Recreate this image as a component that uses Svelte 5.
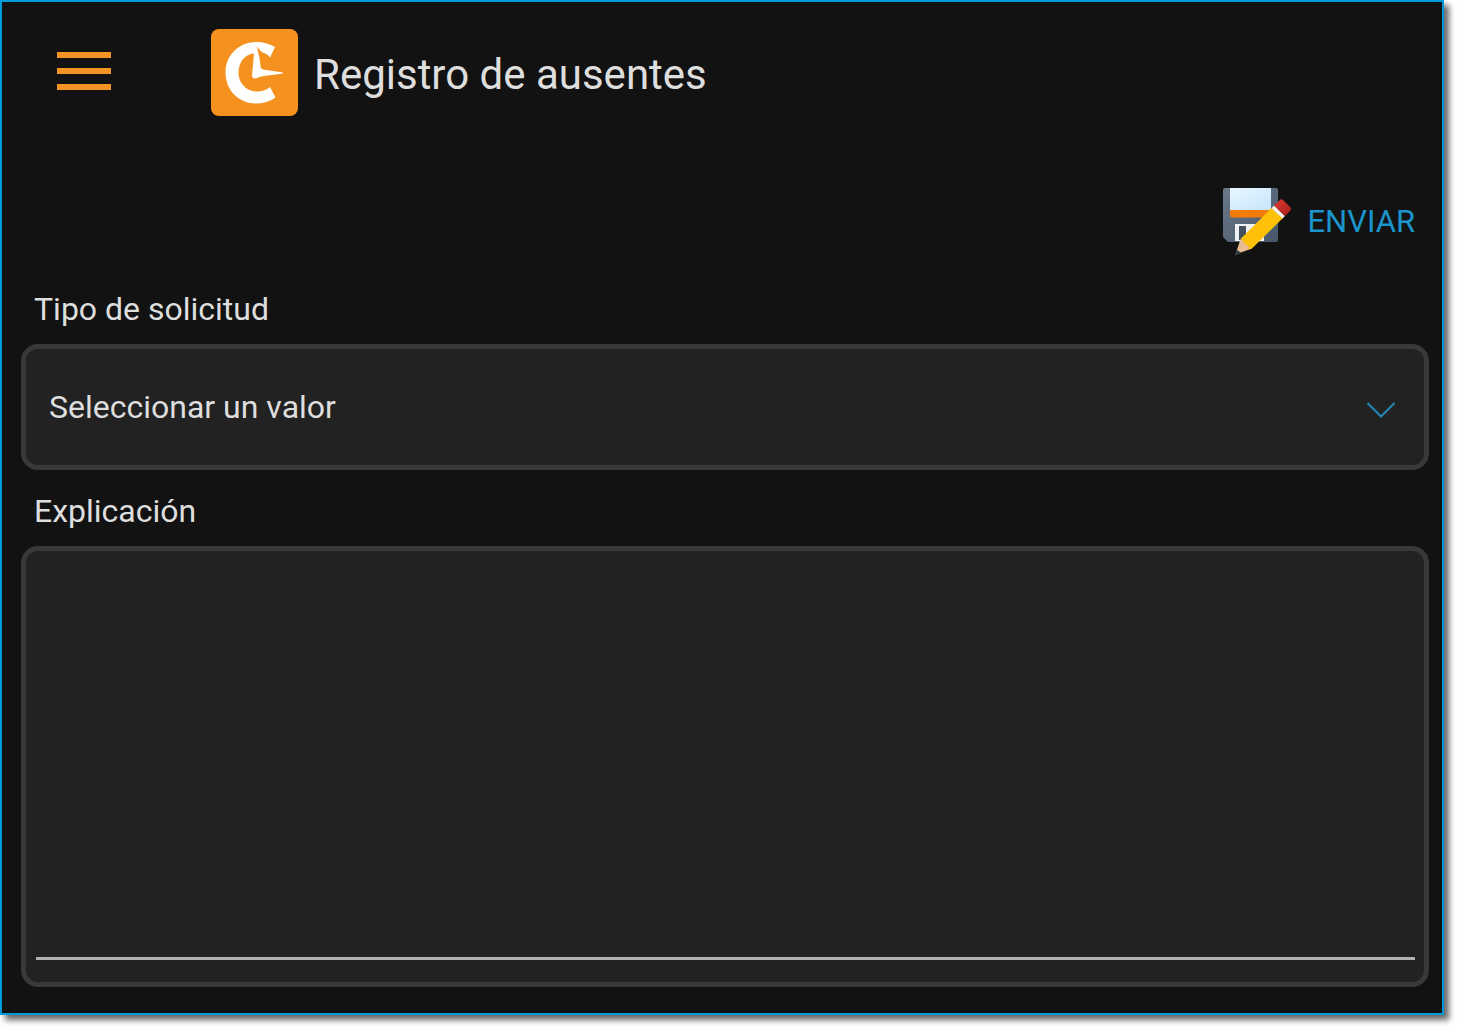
<script>
  let requestType = $state('');
  let explanation = $state('');
</script>

<div class="page">
  <main class="window">
    <header class="topbar">
      <button class="menu" type="button" aria-label="Menú">
        <svg viewBox="0 0 54 38" width="54" height="38" aria-hidden="true">
          <path d="M0 3h54M0 19h54M0 35h54" stroke="#f39325" stroke-width="6" />
        </svg>
      </button>
      <svg class="logo" viewBox="0 0 87 87" width="87" height="87" aria-hidden="true">
        <rect width="87" height="87" rx="8" fill="#f5921f" />
        <path
          d="M64 18C58 14.500 51.500 13 45.500 13C27 13 14.500 27 14.500 43.500C14.500 61 27.500 74.500 45 74.500C52 74.500 59 72.500 64.500 68.500L59 58C55 61.500 50.500 62.500 46 62.500C35 62.500 27.500 54 27.500 43.500C27.500 33 34 25 43 24.500L41 46.500Q41 50 45 49.500Q48.500 47.500 51.500 47.300L72 44.500V43.500L52 40.500L49.800 39L48.500 29L45.700 17Q48.500 21.500 51.500 23.500Q56 24.500 59 28.500Z"
          fill="#fff"
        />
      </svg>
      <h1>Registro de ausentes</h1>
    </header>

    <form class="form" onsubmit={(event) => event.preventDefault()}>
      <button class="send" type="submit">
        <svg viewBox="0 0 69 69" width="69" height="69" aria-hidden="true">
          <defs>
            <linearGradient id="disk" x1="0" y1="0" x2="1" y2="1">
              <stop offset="0" stop-color="#6b7a89" />
              <stop offset="1" stop-color="#46566a" />
            </linearGradient>
            <linearGradient id="label" x1="0" y1="0" x2="1" y2="1">
              <stop offset="0" stop-color="#e8f6ff" />
              <stop offset="1" stop-color="#c5e4fa" />
            </linearGradient>
            <linearGradient id="eraser" x1="0" y1="0" x2="1" y2="1">
              <stop offset="0" stop-color="#de3b32" />
              <stop offset="1" stop-color="#a71f1b" />
            </linearGradient>
          </defs>
          <path d="M2 1H53Q55 1 55 3V53Q55 55 53 55H5L0 50V3Q0 1 2 1Z" fill="url(#disk)" />
          <path d="M7 1H48V23H7Z" fill="url(#label)" />
          <path d="M7 23H48V28Q48 30.500 46 30.500H9Q7 30.500 7 28Z" fill="#f57c0b" />
          <path d="M12 37H41V54H12Z" fill="#eef2f5" />
          <path d="M16 39H23V53H16Z" fill="#43505e" />
          <path d="M12.500 67.500L17.500 52L29 61.500Z" fill="#e8bc91" />
          <path d="M12 68.500L13.500 62.500L18.500 66Z" fill="#373e46" />
          <path d="M17.500 52L48.500 21L60 31L29 61.500L26 62.500Q26 57.500 22 57.500Q21 53.500 17.500 52Z" fill="#ffc107" />
          <path d="M48.500 21L51 18.500L62 29L59.500 31.500Z" fill="#f5f1ef" />
          <path d="M51 18.500L57.500 12.500Q59 12 60 13L67.500 20.500Q68.500 22 67.500 23.500L62 29Z" fill="url(#eraser)" />
        </svg>
        <span>ENVIAR</span>
      </button>

      <label for="request-type">Tipo de solicitud</label>
      <div class="field picker">
        <select id="request-type" bind:value={requestType}>
          <option value="">Seleccionar un valor</option>
        </select>
        <svg class="chevron" viewBox="0 0 30 18" width="30" height="18" aria-hidden="true">
          <path d="M1.500 2L15 15.500L28.500 2" fill="none" stroke="#2589b5" stroke-width="2" />
        </svg>
      </div>

      <label for="explanation">Explicación</label>
      <div class="field notes">
        <textarea id="explanation" bind:value={explanation}></textarea>
      </div>
    </form>
  </main>
</div>

<style>
  :global(body) {
    margin: 0;
    background: #fff;
  }

  .page,
  .page * {
    box-sizing: border-box;
  }

  .page {
    display: flex;
    min-height: 100vh;
    padding: 0 14px 14px 0;
    font-family: Roboto, "Liberation Sans", sans-serif;
    font-size: 32px;
    line-height: 40px;
    color: #dedede;
  }

  .window {
    display: flex;
    flex: 1;
    flex-direction: column;
    min-width: 0;
    border: 2px solid #009bdc;
    background: #121212;
    box-shadow: 5px 5px 6px rgba(0, 0, 0, 0.6);
  }

  .topbar {
    display: flex;
    align-items: center;
    padding: 27px 24px 0 55px;
  }

  button {
    padding: 0;
    border: 0;
    background: none;
    font: inherit;
    cursor: pointer;
  }

  .menu {
    display: flex;
    margin-right: 100px;
    padding-bottom: 4px;
  }

  .logo {
    flex: none;
    margin-right: 16px;
  }

  h1 {
    margin: 0;
    padding-top: 4px;
    font-size: 42px;
    font-weight: 400;
    line-height: 48px;
  }

  .form {
    display: flex;
    flex: 1;
    flex-direction: column;
    padding: 71px 13px 26px 19px;
  }

  .send {
    display: flex;
    align-items: center;
    align-self: flex-end;
    gap: 15px;
    margin: 0 14px 12px 0;
    color: #1b95cb;
    font-size: 31px;
  }

  label {
    margin: 21px 13px 15px;
  }

  .field {
    display: flex;
    border: 5px solid #393939;
    border-radius: 17px;
    background: #222;
  }

  .picker {
    position: relative;
    height: 126px;
  }

  select {
    flex: 1;
    min-width: 0;
    padding: 0 72px 0 23px;
    border: 0;
    border-radius: 12px;
    appearance: none;
    background: #222;
    color: inherit;
    font: inherit;
  }

  .chevron {
    position: absolute;
    top: 50%;
    right: 28px;
    margin-top: -6px;
    pointer-events: none;
  }

  .notes {
    flex: 1;
    min-height: 240px;
    padding: 12px 9px 22px 10px;
  }

  textarea {
    flex: 1;
    min-width: 0;
    padding: 0;
    border: 0;
    border-bottom: 3px solid #b0b0b0;
    background: transparent;
    color: inherit;
    font: inherit;
    resize: none;
  }
</style>
